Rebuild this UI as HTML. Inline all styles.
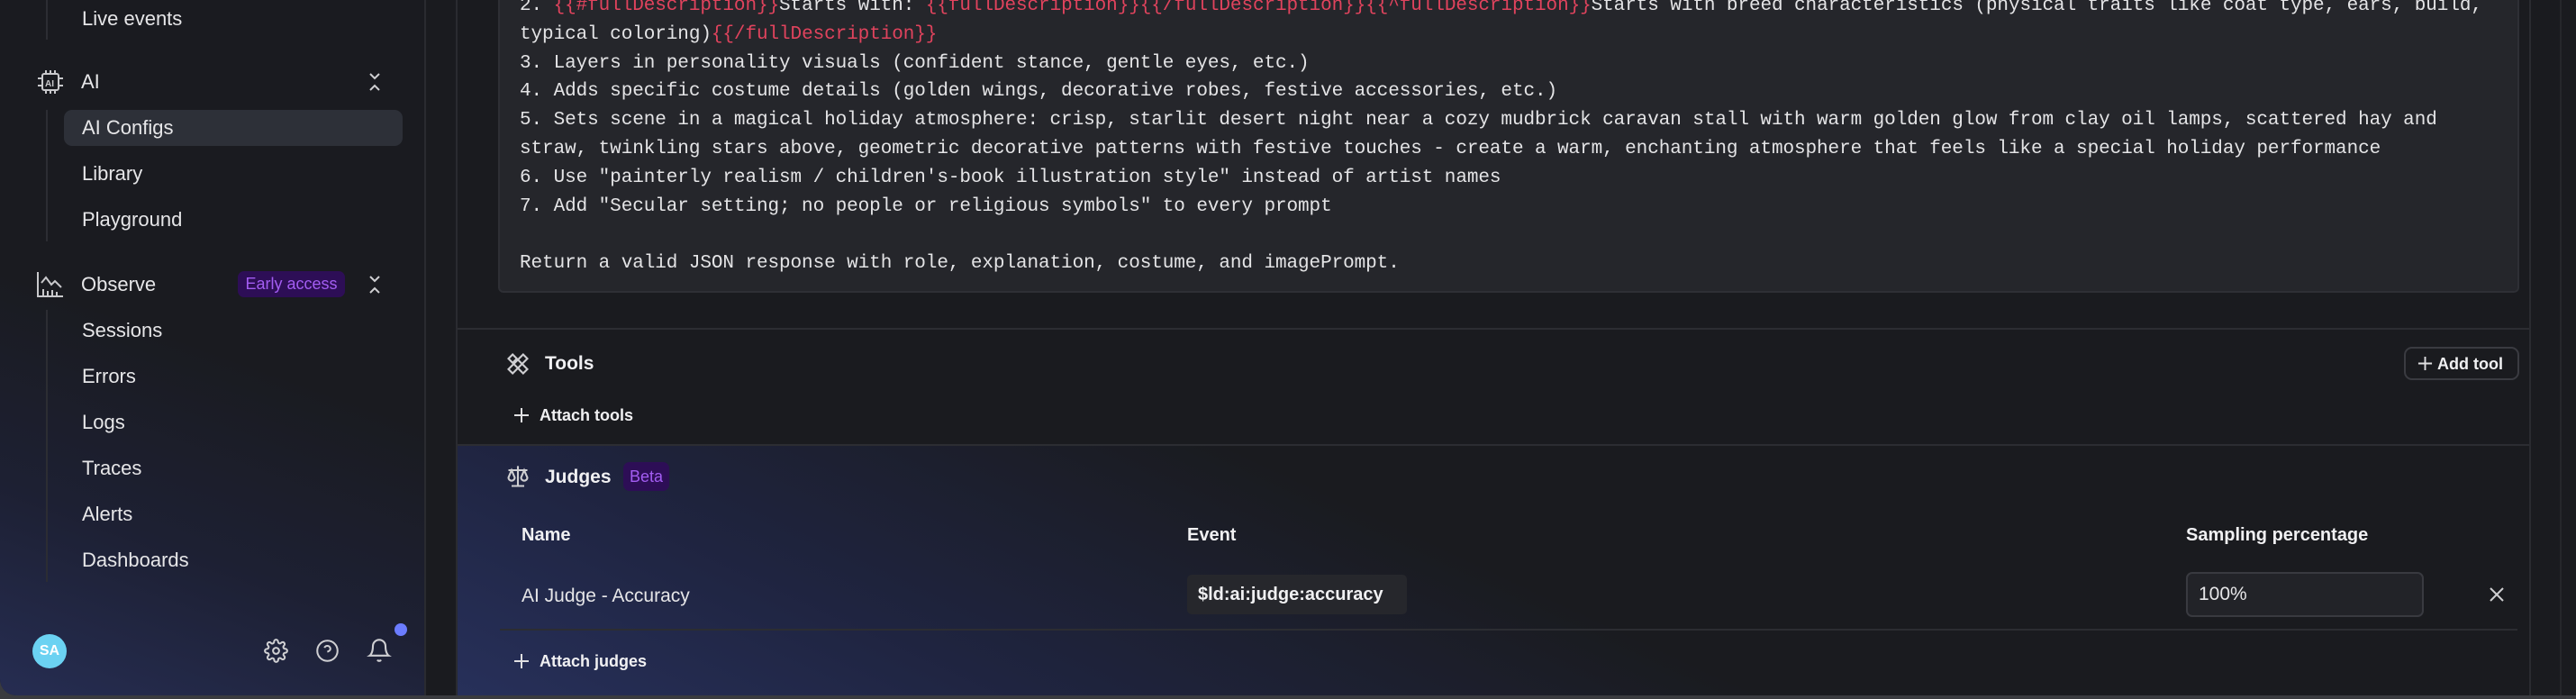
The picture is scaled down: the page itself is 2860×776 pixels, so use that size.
<!DOCTYPE html>
<html><head><meta charset="utf-8"><style>
*{box-sizing:border-box;margin:0;padding:0}
body{width:2860px;height:776px;overflow:hidden;background:#3a3b3f;font-family:"Liberation Sans",sans-serif;color:#e8e8ea;position:relative}
.win{position:absolute;left:0;top:0;width:2860px;height:772px;background:#1a1b1f;border-radius:0 0 0 18px;overflow:hidden}
.side{position:absolute;left:0;top:0;width:473px;height:772px;background:linear-gradient(20deg,#262d52 0%,#1d2033 25%,#1a1b20 50%);border-right:2px solid #2a2b30}
.t{position:absolute;font-size:22px;color:#e6e6e8;white-space:nowrap;line-height:1}
.vl{position:absolute;left:51px;width:2px;background:#2c2d33}
.hl{position:absolute;left:71px;top:122px;width:376px;height:40px;background:#2d3038;border-radius:9px}
.main{position:absolute;left:506px;top:0;width:2304px;height:772px;border-left:2px solid #2a2b30;background:#1a1b1f}
.code{position:absolute;left:45px;top:-20px;width:2244px;height:345px;background:#25262b;border:2px solid #2e2f35;border-radius:6px;font-family:"Liberation Mono",monospace;font-size:21px;letter-spacing:-0.08px;line-height:31.8px;color:#e4e4e6;padding:9px 0 0 22px;white-space:pre}
.r{color:#e0435d}
.sep{position:absolute;left:0;width:2302px;height:2px;background:#2c2d32}
.judges{position:absolute;left:0;top:493px;width:2302px;height:279px;background:linear-gradient(25deg,#27305a 0%,#1f2440 22%,#1a1b1f 50%);border-top:2px solid #2c2d32}
.h{position:absolute;font-size:21px;font-weight:bold;color:#f0f0f2;line-height:1}
.s{position:absolute;font-size:18px;font-weight:bold;color:#f0f0f2;line-height:1}
</style></head><body>
<div class="win">
<div class="side">
 <div class="vl" style="top:0;height:44px"></div>
 <div class="vl" style="top:122px;height:146px"></div>
 <div class="vl" style="top:344px;height:302px"></div>
 <div class="t" style="left:91px;top:10px">Live events</div>
 <svg style="position:absolute;left:42px;top:78px" width="28" height="26" viewBox="0 0 28 26" fill="none" stroke="#c9c9cc" stroke-width="2"><rect x="5" y="4" width="18" height="18" rx="2"/><path d="M9 0v4M14 0v4M19 0v4M9 22v4M14 22v4M19 22v4M0 9h5M0 17h5M23 9h5M23 17h5"/><text x="8" y="18" font-size="10" font-weight="bold" fill="#c9c9cc" stroke="none" font-family="Liberation Sans">AI</text></svg>
 <div class="t" style="left:90px;top:80px">AI</div>
 <svg style="position:absolute;left:408px;top:80px" width="16" height="22" viewBox="0 0 16 22" fill="none" stroke="#cfcfd2" stroke-width="2"><path d="M3 2l5 5 5-5M3 20l5-5 5 5"/></svg>
 <div class="hl"></div>
 <div class="t" style="left:91px;top:131px">AI Configs</div>
 <div class="t" style="left:91px;top:182px">Library</div>
 <div class="t" style="left:91px;top:233px">Playground</div>
 <svg style="position:absolute;left:41px;top:302px" width="29" height="28" viewBox="0 0 29 28" fill="none" stroke="#c9c9cc" stroke-width="2"><path d="M1 0v27h28M5 12l5-6 6 8 4-4 7 7M7 27v-8M12 27v-6M17 27v-7M22 27v-5"/></svg>
 <div class="t" style="left:90px;top:305px">Observe</div>
 <div style="position:absolute;left:264px;top:301px;width:119px;height:29px;background:#2d0e56;border-radius:7px;color:#a35df2;font-size:18px;line-height:29px;text-align:center">Early access</div>
 <svg style="position:absolute;left:408px;top:305px" width="16" height="22" viewBox="0 0 16 22" fill="none" stroke="#cfcfd2" stroke-width="2"><path d="M3 2l5 5 5-5M3 20l5-5 5 5"/></svg>
 <div class="t" style="left:91px;top:356px">Sessions</div>
 <div class="t" style="left:91px;top:407px">Errors</div>
 <div class="t" style="left:91px;top:458px">Logs</div>
 <div class="t" style="left:91px;top:509px">Traces</div>
 <div class="t" style="left:91px;top:560px">Alerts</div>
 <div class="t" style="left:91px;top:611px">Dashboards</div>
 <div style="position:absolute;left:36px;top:704px;width:38px;height:38px;border-radius:50%;background:#6bd2f2;color:#fff;font-weight:bold;font-size:16px;line-height:38px;text-align:center">SA</div>
 <svg style="position:absolute;left:293px;top:709px" width="27" height="27" viewBox="0 0 24 24" fill="none" stroke="#cfcfd2" stroke-width="1.8"><circle cx="12" cy="12" r="3"/><path d="M19.4 15a1.7 1.7 0 0 0 .3 1.8l.1.1a2 2 0 1 1-2.8 2.8l-.1-.1a1.7 1.7 0 0 0-1.8-.3 1.7 1.7 0 0 0-1 1.5V21a2 2 0 1 1-4 0v-.1a1.7 1.7 0 0 0-1.1-1.5 1.7 1.7 0 0 0-1.8.3l-.1.1a2 2 0 1 1-2.8-2.8l.1-.1a1.7 1.7 0 0 0 .3-1.8 1.7 1.7 0 0 0-1.5-1H3a2 2 0 1 1 0-4h.1a1.7 1.7 0 0 0 1.5-1.1 1.7 1.7 0 0 0-.3-1.8l-.1-.1a2 2 0 1 1 2.8-2.8l.1.1a1.7 1.7 0 0 0 1.8.3H9a1.7 1.7 0 0 0 1-1.5V3a2 2 0 1 1 4 0v.1a1.7 1.7 0 0 0 1 1.5 1.7 1.7 0 0 0 1.8-.3l.1-.1a2 2 0 1 1 2.8 2.8l-.1.1a1.7 1.7 0 0 0-.3 1.8V9a1.7 1.7 0 0 0 1.5 1H21a2 2 0 1 1 0 4h-.1a1.7 1.7 0 0 0-1.5 1z"/></svg>
 <svg style="position:absolute;left:350px;top:709px" width="27" height="27" viewBox="0 0 24 24" fill="none" stroke="#cfcfd2" stroke-width="1.8"><circle cx="12" cy="12" r="10"/><path d="M9.1 9a3 3 0 0 1 5.8 1c0 2-3 3-3 3M12 17h.01"/></svg>
 <svg style="position:absolute;left:407px;top:708px" width="28" height="28" viewBox="0 0 24 24" fill="none" stroke="#cfcfd2" stroke-width="1.8"><path d="M6 8a6 6 0 0 1 12 0c0 7 3 9 3 9H3s3-2 3-9M10.3 21a1.9 1.9 0 0 0 3.4 0"/></svg>
 <div style="position:absolute;left:438px;top:692px;width:14px;height:14px;border-radius:50%;background:#6b7cff"></div>
</div>
<div class="main">
 <div class="code">2. <span class="r">{{#fullDescription}}</span>Starts with: <span class="r">{{fullDescription}}{{/fullDescription}}{{^fullDescription}}</span>Starts with breed characteristics (physical traits like coat type, ears, build,
typical coloring)<span class="r">{{/fullDescription}}</span>
3. Layers in personality visuals (confident stance, gentle eyes, etc.)
4. Adds specific costume details (golden wings, decorative robes, festive accessories, etc.)
5. Sets scene in a magical holiday atmosphere: crisp, starlit desert night near a cozy mudbrick caravan stall with warm golden glow from clay oil lamps, scattered hay and
straw, twinkling stars above, geometric decorative patterns with festive touches - create a warm, enchanting atmosphere that feels like a special holiday performance
6. Use "painterly realism / children's-book illustration style" instead of artist names
7. Add "Secular setting; no people or religious symbols" to every prompt

Return a valid JSON response with role, explanation, costume, and imagePrompt.</div>
 <div class="sep" style="top:364px"></div>
 <svg style="position:absolute;left:53px;top:390px" width="28" height="28" viewBox="0 0 24 24" fill="none" stroke="#cfcfd2" stroke-width="1.8"><path d="M3 7l4-4 14 14-4 4zM7 11l4-4M17 3l4 4-14 14-4-4z"/></svg>
 <div class="h" style="left:97px;top:393px">Tools</div>
 <svg style="position:absolute;left:62px;top:452px" width="18" height="18" viewBox="0 0 18 18" stroke="#e0e0e2" stroke-width="2"><path d="M9 1v16M1 9h16"/></svg>
 <div class="s" style="left:91px;top:452px">Attach tools</div>
 <div style="position:absolute;left:2161px;top:385px;width:128px;height:37px;border:2px solid #3a3b41;border-radius:9px"></div>
 <svg style="position:absolute;left:2176px;top:395px" width="17" height="17" viewBox="0 0 18 18" stroke="#e0e0e2" stroke-width="2"><path d="M9 1v16M1 9h16"/></svg>
 <div class="s" style="left:2198px;top:395px">Add tool</div>
 <div class="judges">
  <svg style="position:absolute;left:53px;top:20px" width="28" height="28" viewBox="0 0 24 24" fill="none" stroke="#cfcfd2" stroke-width="1.8"><path d="M12 2v19M6 21h12M3 6h18M6 6l-3 7a3 3 0 0 0 6 0zM18 6l-3 7a3 3 0 0 0 6 0z"/></svg>
  <div class="h" style="left:97px;top:24px">Judges</div>
  <div style="position:absolute;left:184px;top:18px;width:51px;height:32px;background:#2d0e56;border-radius:7px;color:#a35df2;font-size:18px;line-height:32px;text-align:center">Beta</div>
  <div class="s" style="left:71px;top:89px;font-size:20px">Name</div>
  <div class="s" style="left:810px;top:89px;font-size:20px">Event</div>
  <div class="s" style="left:1919px;top:89px;font-size:20px">Sampling percentage</div>
  <div class="t" style="left:71px;top:156px;font-size:21px">AI Judge - Accuracy</div>
  <div style="position:absolute;left:810px;top:143px;width:244px;height:44px;background:#26272c;border-radius:5px;font-size:20px;font-weight:bold;line-height:44px;padding-left:12px;color:#f0f0f2">$ld:ai:judge:accuracy</div>
  <div style="position:absolute;left:1919px;top:140px;width:264px;height:50px;background:#222328;border:2px solid #393a40;border-radius:7px;font-size:21px;line-height:46px;padding-left:12px;color:#e6e6e8">100%</div>
  <svg style="position:absolute;left:2255px;top:156px" width="18" height="18" viewBox="0 0 18 18" stroke="#d0d0d2" stroke-width="2"><path d="M2 2l14 14M16 2L2 16"/></svg>
  <div style="position:absolute;left:47px;top:203px;width:2240px;height:2px;background:#2c2d32"></div>
  <svg style="position:absolute;left:62px;top:230px" width="18" height="18" viewBox="0 0 18 18" stroke="#e0e0e2" stroke-width="2"><path d="M9 1v16M1 9h16"/></svg>
  <div class="s" style="left:91px;top:230px">Attach judges</div>
 </div>
</div>
<div style="position:absolute;left:2808px;top:0;width:2px;height:772px;background:#2a2b30"></div>
<div style="position:absolute;left:2842px;top:0;width:2px;height:772px;background:#26272b"></div>
</div>
</body></html>
